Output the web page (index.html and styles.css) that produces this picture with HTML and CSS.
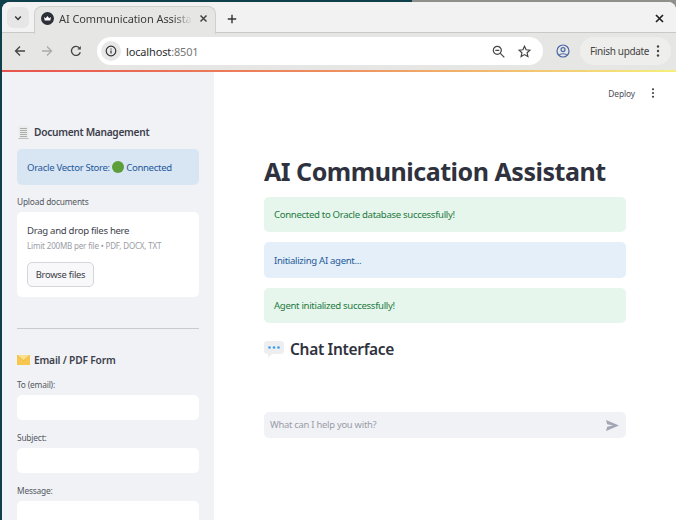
FILE: index.html
```html
<!DOCTYPE html>
<html lang="en">
<head>
<meta charset="utf-8">
<title>AI Communication Assistant</title>
<link rel="stylesheet" href="styles.css">
</head>
<body>
<div class="window">
  <header class="tabstrip">
    <button class="tab-menu"><svg width="10" height="10" viewBox="0 0 10 10"><path d="M2.2 3.6 5 6.4l2.8-2.8" fill="none" stroke="#333" stroke-width="1.4"/></svg></button>
    <div class="tab">
      <svg class="favicon" width="13" height="13" viewBox="0 0 13 13"><circle cx="6.5" cy="6.5" r="6.5" fill="#2b2f38"/><path d="M3 5l1.8 1.2L6.5 4l1.7 2.2L10 5l-.7 3.6H3.700z" fill="#fff"/></svg>
      <span class="tab-title">AI Communication Assista</span>
      <svg class="tab-close" width="9" height="9" viewBox="0 0 9 9"><path d="M1.500 1.500l6 6m0-6l-6 6" stroke="#444" stroke-width="1.500"/></svg>
    </div>
    <svg class="new-tab" width="10" height="10" viewBox="0 0 10 10"><path d="M5 .8v8.400M.8 5h8.400" stroke="#333" stroke-width="1.400"/></svg>
    <svg class="win-close" width="9" height="9" viewBox="0 0 9 9"><path d="M1 1l7 7m0-7L1 8" stroke="#222" stroke-width="1.700"/></svg>
  </header>
  <nav class="toolbar">
    <svg class="nav" width="12" height="12" viewBox="0 0 12 12"><path d="M11 6H1.800M6 1.500 1.500 6 6 10.500" fill="none" stroke="#444" stroke-width="1.300"/></svg>
    <svg class="nav" width="12" height="12" viewBox="0 0 12 12"><path d="M1 6h9.200M6 1.500 10.500 6 6 10.500" fill="none" stroke="#aaa" stroke-width="1.300"/></svg>
    <svg class="nav" width="12" height="12" viewBox="0 0 12 12"><path d="M10.300 7.200A4.500 4.500 0 1 1 9.300 2.900" fill="none" stroke="#444" stroke-width="1.300"/><path d="M10.800 1v3.600H7.200z" fill="#444"/></svg>
    <div class="omnibox">
      <span class="site-info"><svg width="12" height="12" viewBox="0 0 12 12"><circle cx="6" cy="6" r="4.800" fill="none" stroke="#333" stroke-width="1.200"/><path d="M6 5.400v3M6 3.500v1" stroke="#333" stroke-width="1.200"/></svg></span>
      <span class="url">localhost<span class="port">:8501</span></span>
      <svg class="omni-zoom" width="13" height="13" viewBox="0 0 13 13"><circle cx="5.300" cy="5.300" r="4" fill="none" stroke="#444" stroke-width="1.200"/><path d="M8.300 8.300l4 4M3.300 5.300h4" stroke="#444" stroke-width="1.200"/></svg>
      <svg class="omni-star" width="13" height="13" viewBox="0 0 13 13"><path d="M6.500 1.300l1.600 3.500 3.800.4-2.800 2.600.8 3.700-3.400-1.900-3.400 1.900.8-3.700L1.100 5.200l3.800-.4z" fill="none" stroke="#444" stroke-width="1.200"/></svg>
    </div>
    <svg class="profile" width="14" height="14" viewBox="0 0 14 14"><circle cx="7" cy="7" r="6" fill="none" stroke="#4a66a8" stroke-width="1.200"/><circle cx="7" cy="5.600" r="2" fill="none" stroke="#4a66a8" stroke-width="1.200"/><path d="M3.200 11c1-1.700 6.600-1.700 7.600 0" fill="none" stroke="#4a66a8" stroke-width="1.200"/></svg>
    <div class="update"><span>Finish update</span><svg width="4" height="12" viewBox="0 0 4 12"><circle cx="2" cy="1.500" r="1.200" fill="#444"/><circle cx="2" cy="6" r="1.200" fill="#444"/><circle cx="2" cy="10.500" r="1.200" fill="#444"/></svg></div>
  </nav>
  <div class="rainbow"></div>
  <div class="app">
    <aside class="sidebar">
      <h3 class="side-heading first"><svg class="emoji" width="13" height="14" viewBox="0 0 13 14"><path d="M1.500 1h10v12h-10z" fill="#ececec"/><path d="M1.500 13h10v1h-10z" fill="#bdbdbd"/><path d="M3 3.500h7M3 5.500h7M3 7.500h7M3 9.500h7M3 11.500h7" stroke="#9c9c9c" stroke-width=".8"/></svg>Document Management</h3>
      <div class="alert side-alert">Oracle Vector Store: <svg class="dot" width="12" height="12" viewBox="0 0 12 12"><circle cx="6" cy="6" r="6" fill="#5b9e3a"/></svg> Connected</div>
      <label class="field-label upload-label">Upload documents</label>
      <section class="dropzone">
        <div class="drop-title">Drag and drop files here</div>
        <div class="drop-limit">Limit 200MB per file • PDF, DOCX, TXT</div>
        <button class="browse">Browse files</button>
      </section>
      <hr class="divider">
      <h3 class="side-heading"><svg class="emoji" width="13" height="10" viewBox="0 0 13 10"><path d="M0 0h13v10H0z" fill="#f7c64f"/><path d="M0 0l6.500 5.500L13 0" fill="#fbe08e" stroke="#e8ae35" stroke-width=".6"/></svg><span class="heading-wide">Email / PDF Form</span></h3>
      <label class="field-label">To (email):</label>
      <div class="input"></div>
      <label class="field-label">Subject:</label>
      <div class="input"></div>
      <label class="field-label">Message:</label>
      <div class="input tall"></div>
    </aside>
    <main class="main">
      <div class="topbar"><span class="deploy">Deploy</span><svg width="4" height="10" viewBox="0 0 4 10"><circle cx="2" cy="1.300" r="1" fill="#333"/><circle cx="2" cy="5" r="1" fill="#333"/><circle cx="2" cy="8.700" r="1" fill="#333"/></svg></div>
      <div class="content">
        <h1>AI Communication Assistant</h1>
        <div class="alert success">Connected to Oracle database successfully!</div>
        <div class="alert info">Initializing AI agent...</div>
        <div class="alert success">Agent initialized successfully!</div>
        <h2><svg class="emoji-lg" width="20" height="17" viewBox="0 0 20 17"><path d="M3 0h14a3 3 0 0 1 3 3v7a3 3 0 0 1-3 3H8l-4 4v-4H3a3 3 0 0 1-3-3V3a3 3 0 0 1 3-3z" fill="#eceef0"/><circle cx="5.500" cy="6.500" r="1.300" fill="#3b9cf0"/><circle cx="10" cy="6.500" r="1.300" fill="#3b9cf0"/><circle cx="14.500" cy="6.500" r="1.300" fill="#3b9cf0"/></svg>Chat Interface</h2>
        <div class="chat-input"><span class="chat-placeholder">What can I help you with?</span><svg width="13" height="11" viewBox="0 0 13 11"><path d="M0 0l13 5.500L0 11l1.200-4.300L7 5.500 1.200 4.300z" fill="#a3a6b5"/></svg></div>
      </div>
    </main>
  </div>
</div>
</body>
</html>
```
FILE: styles.css
```css
* { box-sizing: border-box; }
html, body { margin: 0; height: 100%; overflow: hidden; }
body {
  background: linear-gradient(90deg, #0e3f4a 0, #0e3f4a 412px, #8f8f8c 412px);
  font-family: "Noto Sans", sans-serif;
  padding: 2px 0 0 2px;
}
.window {
  height: 518px;
  display: flex;
  flex-direction: column;
  background: #fff;
  border-radius: 8px 8px 0 0;
  overflow: hidden;
}
.tabstrip {
  height: 30px;
  flex: none;
  display: flex;
  align-items: flex-start;
  background: #f2f2f2;
  padding: 0 12px 0 5px;
  position: relative;
  z-index: 1;
}
.tab-menu {
  width: 22px;
  height: 21px;
  margin-top: 5px;
  border: 0;
  padding: 0;
  border-radius: 6px;
  background: #e6e6e6;
  display: flex;
  align-items: center;
  justify-content: center;
}
.tab {
  width: 182px;
  height: 28px;
  margin: 4px 0 0 5px;
  background: #e6e6e4;
  border: 1px solid #cfcfcd;
  border-bottom: 0;
  border-radius: 8px 8px 0 0;
  display: flex;
  align-items: center;
  padding: 0 7px 5px 6px;
}
.favicon { flex: none; }
.tab-title {
  margin-left: 5px;
  font-size: 11px;
  letter-spacing: -.08px;
  color: #3c3c3c;
  white-space: nowrap;
  -webkit-mask-image: linear-gradient(90deg, #000 86%, transparent);
  mask-image: linear-gradient(90deg, #000 86%, transparent);
}
.tab-close { margin-left: auto; flex: none; }
.new-tab { margin: 12px 0 0 11px; }
.win-close { margin: 12px 0 0 auto; }
.toolbar {
  height: 38px;
  flex: none;
  display: flex;
  align-items: center;
  background: #e6e6e4;
  border-top: 1px solid #c9c9c7;
  padding: 0 0 1px 12px;
}
.nav { margin-right: 15px; }
.nav:nth-child(2) { margin-right: 17px; }
.omnibox {
  width: 446px;
  height: 28px;
  display: flex;
  align-items: center;
  background: #fff;
  border-radius: 14px;
  padding: 0 12px 0 4px;
}
.site-info {
  width: 20px;
  height: 20px;
  border-radius: 50%;
  background: #e8e8e8;
  display: flex;
  align-items: center;
  justify-content: center;
  margin-right: 5px;
}
.url { font-size: 11px; color: #2f2f2f; letter-spacing: -.15px; }
.port { color: #777; }
.omni-zoom { margin-left: auto; margin-right: 13px; }
.profile { margin-left: 13px; flex: none; }
.update {
  margin-left: 10px;
  width: 91px;
  height: 28px;
  border-radius: 14px;
  background: #eeeeec;
  display: flex;
  align-items: center;
  justify-content: space-between;
  padding: 0 11px 0 10px;
  font-size: 10px;
  letter-spacing: -.33px;
  color: #444;
}
.rainbow {
  height: 2px;
  flex: none;
  background: linear-gradient(90deg, #e8524f 0, #ee8f5f 50%, #f3c873 80%, #f5f07a 100%);
}
.app { flex: 1; display: flex; min-height: 0; }
.sidebar {
  width: 212px;
  flex: none;
  background: #f0f2f6;
  padding: 53px 15px 0;
  overflow: hidden;
  color: #31333f;
}
.side-heading {
  margin: 0;
  height: 14px;
  display: flex;
  align-items: center;
  font-size: 10.200px;
  font-weight: 600;
  color: #3d3f4b;
  letter-spacing: -.3px;
}
.heading-wide { letter-spacing: -.18px; }
.emoji { margin-right: 4px; flex: none; }
.alert {
  border-radius: 5px;
  font-size: 9.600px;
  letter-spacing: -.32px;
  display: flex;
  align-items: center;
  padding-left: 10px;
  white-space: pre;
}
.side-alert {
  height: 36px;
  margin-top: 10px;
  background: #d8e5f3;
  color: #1f5a9a;
}
.field-label {
  display: block;
  font-size: 8.400px;
  letter-spacing: -.2px;
  color: #55575f;
  height: 12px;
  line-height: 12px;
  margin: 12px 0 4px;
}
.upload-label { margin: 11px 0 4px; }
.dropzone {
  height: 85px;
  background: #fff;
  border-radius: 5px;
  padding: 12px 10px 0;
}
.drop-title { font-size: 9.600px; letter-spacing: -.3px; color: #40424d; height: 14px; line-height: 14px; }
.drop-limit { font-size: 8px; letter-spacing: -.17px; color: #9a9ca5; height: 12px; line-height: 12px; margin-top: 2px; }
.browse {
  display: block;
  margin-top: 10px;
  width: 67px;
  height: 25px;
  padding: 0;
  border: 1px solid #d5d6da;
  border-radius: 5px;
  background: #f8f8fa;
  font: 9.400px "Noto Sans", sans-serif;
  letter-spacing: -.25px;
  color: #3b3d48;
}
.divider {
  border: 0;
  border-top: 1px solid #c9cad0;
  margin: 31px 0 24px;
}
.input { height: 25px; background: #fff; border-radius: 5px; }
.input.tall { height: 60px; }
.main { flex: 1; min-width: 0; display: flex; flex-direction: column; background: #fff; }
.topbar {
  height: 42px;
  flex: none;
  display: flex;
  align-items: center;
  justify-content: flex-end;
  padding: 0 21px 0 0;
  font-size: 8.400px;
  letter-spacing: -.1px;
  color: #4c4e58;
}
.deploy { margin-right: 16px; }
.content { padding: 42px 50px 0; }
h1 {
  margin: 0;
  height: 30px;
  line-height: 30px;
  font-size: 25px;
  font-weight: 700;
  color: #2f323e;
  letter-spacing: -.47px;
  white-space: nowrap;
}
.content .alert { height: 35px; margin-bottom: 10px; }
.content h1 + .alert { margin-top: 11px; }
.success { background: #e6f6ec; color: #1f7a3f; }
.info { background: #e5eff9; color: #1f5a9a; }
.content .info { height: 36px; }
h2 {
  margin: 15px 0 0;
  height: 22px;
  display: flex;
  align-items: center;
  font-size: 15.500px;
  font-weight: 600;
  color: #2f323e;
  letter-spacing: -.32px;
}
.emoji-lg { margin-right: 6px; flex: none; }
.chat-input {
  height: 26px;
  margin-top: 52px;
  background: #f0f2f6;
  border-radius: 5px;
  padding: 0 7px 0 6px;
  display: flex;
  align-items: center;
  justify-content: space-between;
  font-size: 9.400px;
  letter-spacing: -.25px;
  color: #9a9ca8;
}
.chat-placeholder { padding-bottom: 2px; }
```
